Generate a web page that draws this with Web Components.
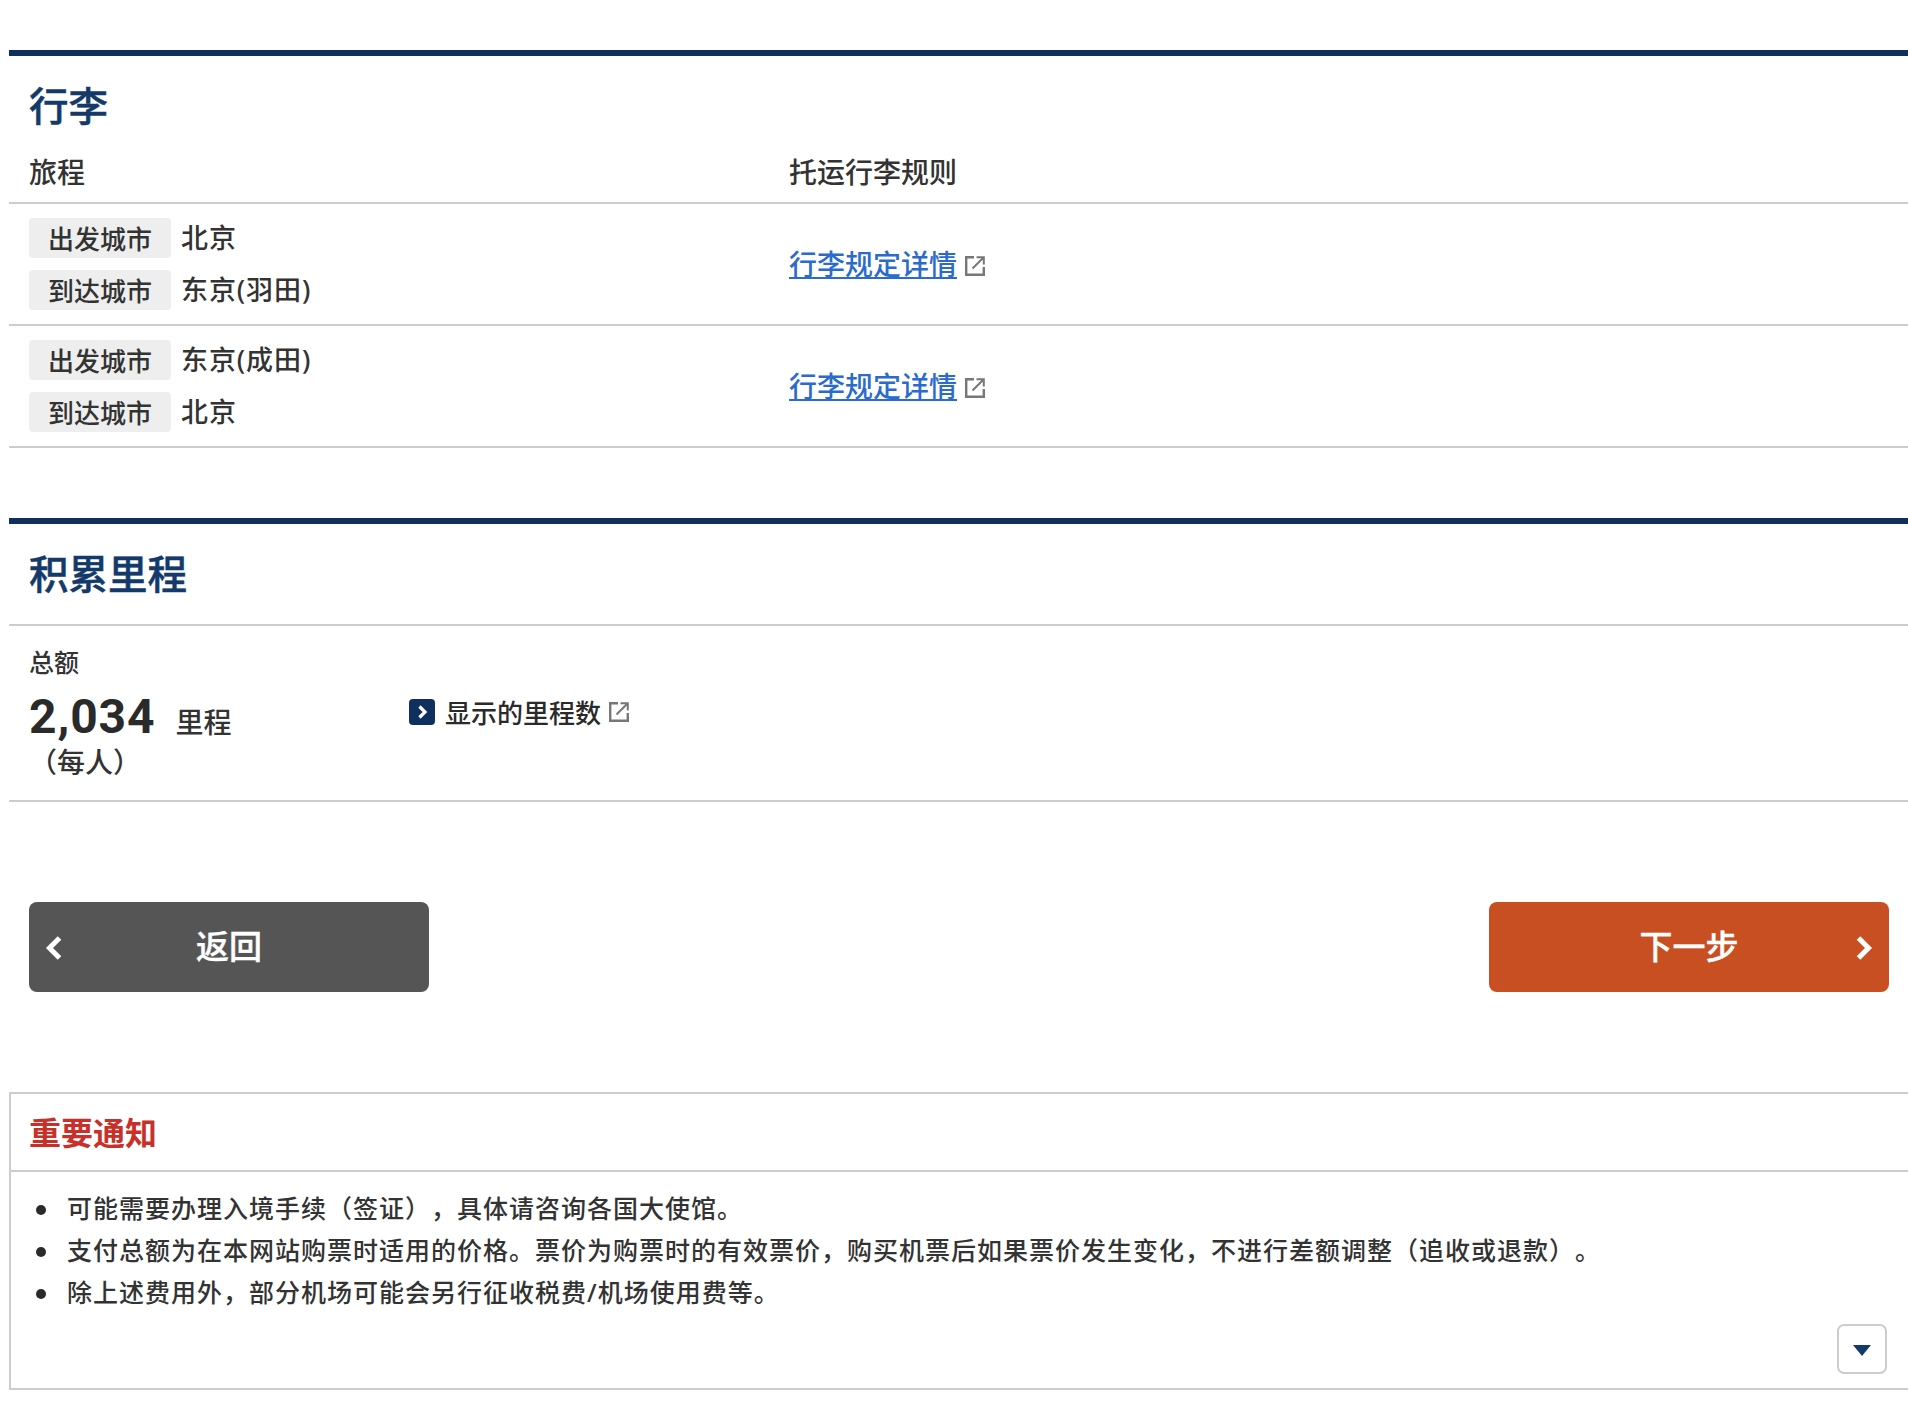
<!DOCTYPE html>
<html lang="zh-CN">
<head>
<meta charset="utf-8">
<title>行李</title>
<style>
  html, body { margin: 0; background: #fff; }
  body {
    padding: 50px 0 22px 9px;
    font-family: "Noto Sans", "Noto Sans CJK SC", sans-serif;
    font-size: 26px;
    font-weight: 500;
    color: #333;
    text-spacing-trim: space-all;
  }
</style>
</head>
<body>
  <section-block heading="行李">
    <bag-table>
      <bag-row from="北京" to="东京(羽田)"></bag-row>
      <bag-row from="东京(成田)" to="北京"></bag-row>
    </bag-table>
  </section-block>

  <section-block heading="积累里程">
    <miles-total></miles-total>
  </section-block>

  <nav-buttons></nav-buttons>

  <notice-box heading="重要通知">
    <li>可能需要办理入境手续（签证），具体请咨询各国大使馆。</li>
    <li>支付总额为在本网站购票时适用的价格。票价为购票时的有效票价，购买机票后如果票价发生变化，不进行差额调整（追收或退款）。</li>
    <li>除上述费用外，部分机场可能会另行征收税费/机场使用费等。</li>
  </notice-box>

<script>
const EXT_ICON = `<svg width="22" height="22" viewBox="0 0 22 22" fill="none" stroke="#777" stroke-width="2.4">
  <path d="M10 2.2H2.2v17.6h17.6V12"/><path d="M8.5 13.5L19 3M12.5 2.2h7.3v7.3" stroke-width="2"/></svg>`;

class SectionBlock extends HTMLElement {
  constructor() {
    super();
    this.root = this.attachShadow({ mode: 'open' });
    this.root.innerHTML = `
      <style>
        :host { display: block; border-top: 6px solid #0f2f5f; }
        h2 {
          margin: 0;
          padding: 25px 0 0 20px;
          height: 63px;
          font-size: 39.5px;
          line-height: 50px;
          font-weight: 500;
          -webkit-text-stroke: .5px #14396b;
          color: #14396b;
        }
      </style>
      <h2></h2>
      <slot></slot>`;
  }

  connectedCallback() {
    this.root.querySelector('h2').textContent = this.getAttribute('heading');
  }
}

class BagTable extends HTMLElement {
  constructor() {
    super();
    this.root = this.attachShadow({ mode: 'open' });
    this.root.innerHTML = `
      <style>
        :host { display: block; margin-bottom: 70px; }
        .head {
          display: grid;
          grid-template-columns: 760px 1fr;
          height: 58px;
          line-height: 56px;
          padding-left: 20px;
          border-bottom: 2px solid #ccc;
          font-size: 28px;
        }
      </style>
      <div class="head"><span>旅程</span><span>托运行李规则</span></div>
      <slot></slot>`;
  }
}

class BagRow extends HTMLElement {
  constructor() {
    super();
    this.root = this.attachShadow({ mode: 'open' });
    this.root.innerHTML = `
      <style>
        :host {
          display: grid;
          grid-template-columns: 760px 1fr;
          align-items: center;
          height: 120px;
          padding-left: 20px;
          border-bottom: 2px solid #ccc;
        }
        .cities { display: grid; grid-template-columns: 142px 1fr; column-gap: 10px; row-gap: 12px; align-items: center; }
        .tag {
          height: 40px;
          line-height: 42px;
          text-align: center;
          background: #eee;
          border-radius: 4px;
          font-size: 26px;
        }
        .city { font-size: 27px; line-height: 40px; letter-spacing: .9px; }
        .rule { display: flex; align-items: center; gap: 7px; }
        a { color: #2a6bcc; text-decoration: underline; font-size: 28px; margin-bottom: 2px; }
        svg { display: block; margin-top: 3px; }
      </style>
      <div class="cities">
        <span class="tag">出发城市</span><span class="city from"></span>
        <span class="tag">到达城市</span><span class="city to"></span>
      </div>
      <div class="rule"><a href="#">行李规定详情</a>${EXT_ICON}</div>`;
  }

  connectedCallback() {
    this.root.querySelector('.from').textContent = this.getAttribute('from');
    this.root.querySelector('.to').textContent = this.getAttribute('to');
  }
}

class MilesTotal extends HTMLElement {
  constructor() {
    super();
    this.root = this.attachShadow({ mode: 'open' });
    this.root.innerHTML = `
      <style>
        :host {
          display: flex;
          height: 174px;
          margin-top: 12px;
          padding-left: 20px;
          border-top: 2px solid #ccc;
          border-bottom: 2px solid #ccc;
        }
        .total { width: 380px; padding-top: 19px; }
        .label { font-size: 25px; line-height: 34px; }
        .amount { line-height: 62px; height: 62px; margin-top: 7px; white-space: nowrap; }
        .num { font-size: 48px; font-weight: 700; letter-spacing: .9px; color: #2a2a2a; font-family: Roboto, "Noto Sans", sans-serif; }
        .unit { font-size: 28px; margin-left: 20px; }
        .per { font-size: 28px; line-height: 36px; margin-top: -4px; }
        .link { display: flex; align-items: center; height: 46px; margin-top: 63px; font-size: 26px; color: #2a2a2a; }
        .go { width: 26px; height: 26px; margin-right: 10px; }
        .ext { margin-left: 7px; }
        svg { display: block; }
      </style>
      <div class="total">
        <div class="label">总额</div>
        <div class="amount"><span class="num">2,034</span><span class="unit">里程</span></div>
        <div class="per">（每人）</div>
      </div>
      <div class="link">
        <svg class="go" viewBox="0 0 26 26"><rect width="26" height="26" rx="4" fill="#0f2f5f"/><path d="M10.5 7.5L16 13l-5.5 5.5" fill="none" stroke="#fff" stroke-width="3.2"/></svg>
        <span>显示的里程数</span>
        <span class="ext">${EXT_ICON}</span>
      </div>`;
  }
}

class NavButtons extends HTMLElement {
  constructor() {
    super();
    this.root = this.attachShadow({ mode: 'open' });
    this.root.innerHTML = `
      <style>
        :host { display: flex; justify-content: space-between; padding: 100px 19px 0 20px; }
        button {
          position: relative;
          width: 400px;
          height: 90px;
          padding: 0 0 5px;
          border: 0;
          border-radius: 8px;
          color: #fff;
          font: 500 33px "Noto Sans", "Noto Sans CJK SC", sans-serif;
          -webkit-text-stroke: .4px #fff;
        }
        .back { background: #555; }
        .next { background: #c74f21; }
        svg { position: absolute; top: 33px; width: 18px; height: 26px; }
        .back svg { left: 16px; }
        .next svg { right: 16px; }
      </style>
      <button class="back"><svg viewBox="0 0 18 26"><path d="M14.5 3L4.5 13l10 10" fill="none" stroke="#fff" stroke-width="5"/></svg>返回</button>
      <button class="next">下一步<svg viewBox="0 0 18 26"><path d="M3.5 3l10 10-10 10" fill="none" stroke="#fff" stroke-width="5"/></svg></button>`;
  }
}

class NoticeBox extends HTMLElement {
  constructor() {
    super();
    this.root = this.attachShadow({ mode: 'open' });
    this.root.innerHTML = `
      <style>
        :host {
          display: block;
          position: relative;
          margin-top: 100px;
          height: 294px;
          border: 2px solid #ccc;
          border-right: 0;
        }
        h3 {
          margin: 0;
          height: 76px;
          padding-left: 18px;
          line-height: 78px;
          font-size: 32px;
          font-weight: 700;
          color: #c8312a;
          border-bottom: 2px solid #ccc;
        }
        ul { margin: 0; padding: 15px 0 0 56px; list-style: none; }
        ::slotted(li) { font-size: 25px; line-height: 42px; letter-spacing: 1px; }
        ::slotted(li)::before {
          content: "";
          display: inline-block;
          width: 10px;
          height: 10px;
          margin: 0 21px 3px -31px;
          border-radius: 50%;
          background: #2a2a2a;
        }
        .more {
          position: absolute;
          right: 21px;
          bottom: 14px;
          width: 50px;
          height: 50px;
          box-sizing: border-box;
          padding: 0;
          border: 2px solid #ccc;
          border-radius: 7px;
          background: #fff;
        }
        .more svg { display: block; margin: 3px auto 0; }
      </style>
      <h3></h3>
      <ul><slot></slot></ul>
      <button class="more"><svg width="18" height="11" viewBox="0 0 18 11"><path d="M0 0h18L9 11z" fill="#14396b"/></svg></button>`;
  }

  connectedCallback() {
    this.root.querySelector('h3').textContent = this.getAttribute('heading');
  }
}

customElements.define('section-block', SectionBlock);
customElements.define('bag-table', BagTable);
customElements.define('bag-row', BagRow);
customElements.define('miles-total', MilesTotal);
customElements.define('nav-buttons', NavButtons);
customElements.define('notice-box', NoticeBox);
</script>
</body>
</html>
